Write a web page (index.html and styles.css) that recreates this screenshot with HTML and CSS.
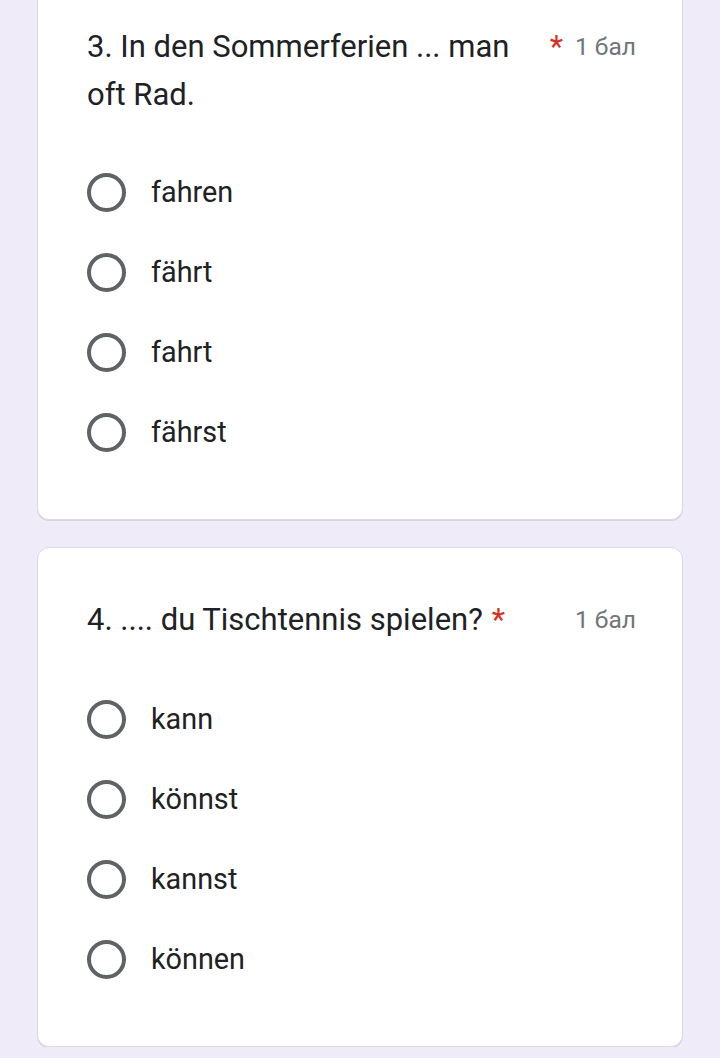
FILE: index.html
```html
<!DOCTYPE html>
<html>
<head>
<meta charset="utf-8">
<link rel="stylesheet" href="styles.css">
</head>
<body>
<div class="page">
  <div class="card first">
    <div class="head">
      <div class="title"><span class="text">3. In den Sommerferien ... man oft Rad.</span><span class="req">*</span></div>
      <div class="points">1 бал</div>
    </div>
    <div class="options">
      <div class="opt"><span class="radio"></span><span class="label">fahren</span></div>
      <div class="opt"><span class="radio"></span><span class="label">fährt</span></div>
      <div class="opt"><span class="radio"></span><span class="label">fahrt</span></div>
      <div class="opt"><span class="radio"></span><span class="label">fährst</span></div>
    </div>
  </div>
  <div class="card">
    <div class="head">
      <div class="title"><span class="text">4. .... du Tischtennis spielen?</span><span class="req">*</span></div>
      <div class="points">1 бал</div>
    </div>
    <div class="options">
      <div class="opt"><span class="radio"></span><span class="label">kann</span></div>
      <div class="opt"><span class="radio"></span><span class="label">könnst</span></div>
      <div class="opt"><span class="radio"></span><span class="label">kannst</span></div>
      <div class="opt"><span class="radio"></span><span class="label">können</span></div>
    </div>
  </div>
</div>
</body>
</html>
```
FILE: styles.css
```css
html, body {
  margin: 0;
  padding: 0;
  background: #efebf8;
  font-family: Roboto, "Noto Sans", Arial, sans-serif;
  color: #202124;
  overflow: hidden;
}
.page {
  display: flex;
  flex-direction: column;
  gap: 27px;
  padding: 0 37px;
}
.card {
  background: #fff;
  border: 1px solid #dadce0;
  border-radius: 12px;
  box-shadow: 0 1px 0 #d6d6dc;
  padding: 48px 49px 47px 49px;
}
.card.first {
  margin-top: -26px;
}
.head {
  display: flex;
  align-items: flex-start;
  gap: 12px;
}
.title {
  flex: 1;
  display: flex;
  align-items: flex-start;
  min-width: 0;
}
.text {
  flex: 0 1 auto;
  font-size: 31px;
  line-height: 48px;
}
.req {
  flex: none;
  margin-left: 9px;
  color: #d93025;
  font-size: 31px;
  line-height: 48px;
}
.points {
  flex: none;
  width: 58px;
  font-size: 24.5px;
  line-height: 48px;
  color: #70757a;
  white-space: nowrap;
}
.options {
  margin-top: 35px;
  display: flex;
  flex-direction: column;
}
.card.first .options {
  margin-top: 33px;
}
.opt {
  height: 80px;
  display: flex;
  align-items: center;
}
.radio {
  box-sizing: border-box;
  width: 39px;
  height: 39px;
  border: 4px solid #5f6368;
  border-radius: 50%;
  flex: none;
}
.label {
  margin-left: 25px;
  font-size: 28.8px;
}
```
